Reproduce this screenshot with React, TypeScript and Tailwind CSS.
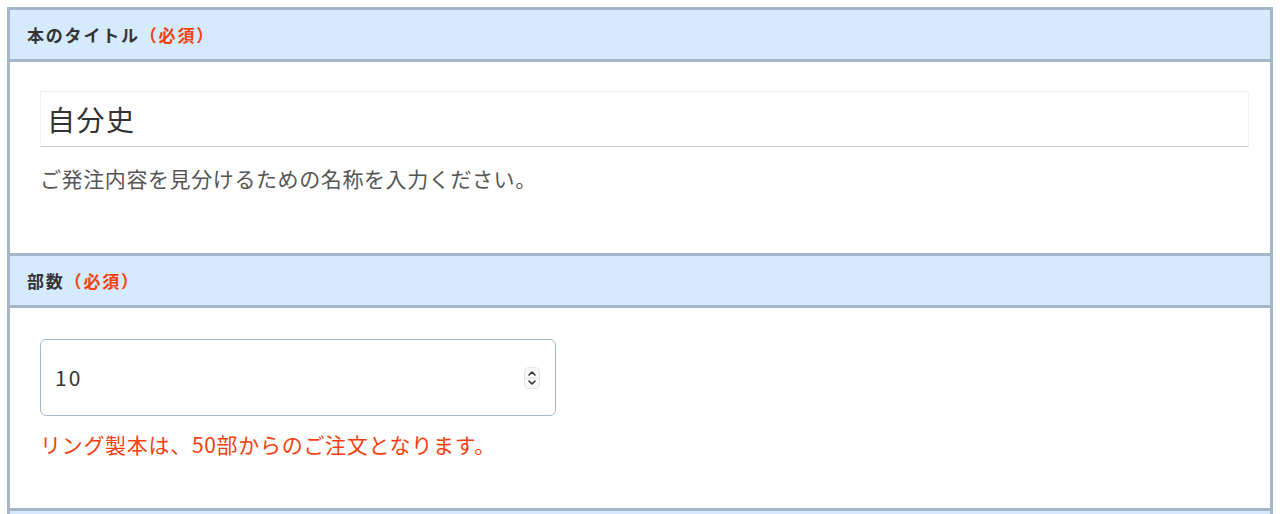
import React from "react";

const font = { fontFamily: '"Noto Sans CJK JP", "Noto Sans", sans-serif' };

function Header({ label }: { label: string }) {
  return (
    <div className="h-[52px] flex items-center pl-[17px] bg-[#d5eafc] border-b-[3px] border-[#a5b6c8]">
      <span className="text-[17px] font-bold tracking-[1.8px] text-[#333] leading-none">
        {label}
        <span className="text-[#f5400e]">（必須）</span>
      </span>
    </div>
  );
}

function Spinner() {
  return (
    <svg width="16" height="22" viewBox="0 0 16 22" className="mr-[15px]">
      <rect x="0.5" y="0.5" width="15" height="21" rx="4" fill="#f7f7f7" stroke="#e6e6e6" />
      <line x1="1" y1="11" x2="15" y2="11" stroke="#e2e2e2" />
      <path d="M5 8 L8 5 L11 8" fill="none" stroke="#333" strokeWidth="1.6" strokeLinecap="round" strokeLinejoin="round" />
      <path d="M5 14 L8 17 L11 14" fill="none" stroke="#333" strokeWidth="1.6" strokeLinecap="round" strokeLinejoin="round" />
    </svg>
  );
}

export default function App() {
  return (
    <div className="bg-white w-[1280px] h-[514px] overflow-hidden pt-[7px]" style={font}>
      <div className="mx-[7px] border-x-[3px] border-t-[3px] border-[#a5b6c8]">
        <Header label="本のタイトル" />
        <div className="h-[194px] bg-white border-b-[3px] border-[#a5b6c8] pt-[29px] pl-[30px] pr-[21px]">
          <div className="h-[56px] flex items-center pl-[6px] border border-[#efefef] border-b-[#c8c8c8] bg-white">
            <span className="text-[28px] tracking-[1.5px] text-[#333] leading-none">自分史</span>
          </div>
          <div className="mt-[16px] text-[21px] leading-[30px] tracking-[0.6px] text-[#555]">
            ご発注内容を見分けるための名称を入力ください。
          </div>
        </div>
        <Header label="部数" />
        <div className="h-[203px] bg-white border-b-[3px] border-[#a5b6c8] pt-[31px] pl-[30px]">
          <div className="w-[516px] h-[77px] flex items-center justify-between rounded-[6px] border border-[#a7b6cb] bg-white">
            <span className="pl-[14px] text-[21px] text-[#333] tracking-[2px] leading-none">10</span>
            <Spinner />
          </div>
          <div className="mt-[13px] text-[21px] leading-[30px] tracking-[0.7px] text-[#f5400e]">
            リング製本は、50部からのご注文となります。
          </div>
        </div>
        <div className="h-[20px] bg-[#d5eafc]" />
      </div>
    </div>
  );
}
